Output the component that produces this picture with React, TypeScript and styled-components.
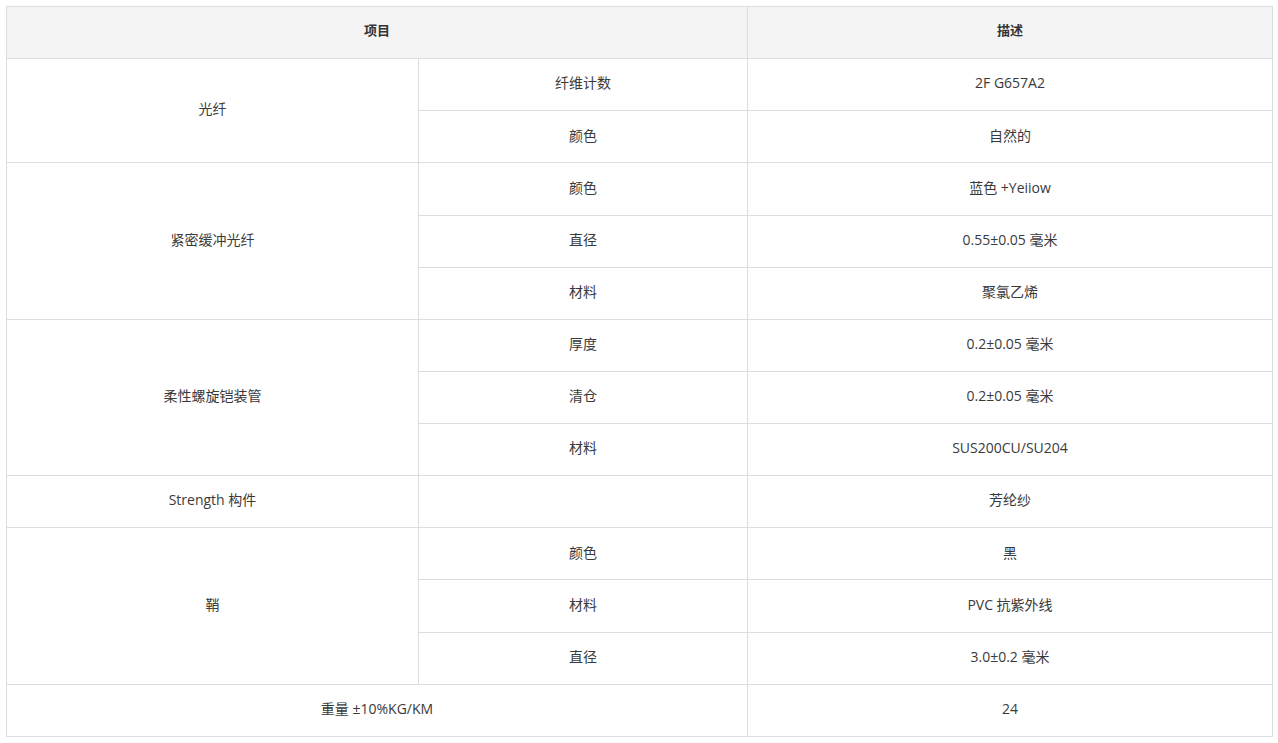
import React from 'react';
import styled, { createGlobalStyle } from 'styled-components';

const GlobalStyle = createGlobalStyle`
    body {
        margin: 6px 5px 6px 6px;
        background: #ffffff;
        font-family: "Open Sans", "Noto Sans CJK SC", sans-serif;
        color: #333333;
    }
`;

interface Row {
    group?: { label: string; span: number };
    item: string;
    value: string;
}

const rows: Row[] = [
    { group: { label: '光纤', span: 2 }, item: '纤维计数', value: '2F G657A2' },
    { item: '颜色', value: '自然的' },
    { group: { label: '紧密缓冲光纤', span: 3 }, item: '颜色', value: '蓝色 +Yeiiow' },
    { item: '直径', value: '0.55±0.05 毫米' },
    { item: '材料', value: '聚氯乙烯' },
    { group: { label: '柔性螺旋铠装管', span: 3 }, item: '厚度', value: '0.2±0.05 毫米' },
    { item: '清仓', value: '0.2±0.05 毫米' },
    { item: '材料', value: 'SUS200CU/SU204' },
    { group: { label: 'Strength 构件', span: 1 }, item: '', value: '芳纶纱' },
    { group: { label: '鞘', span: 3 }, item: '颜色', value: '黑' },
    { item: '材料', value: 'PVC 抗紫外线' },
    { item: '直径', value: '3.0±0.2 毫米' },
];

export default function App() {
    return (<>
        <GlobalStyle />
        <SpecTable>
            <colgroup>
                <col style={{ width: 412 }} />
                <col style={{ width: 329 }} />
                <col />
            </colgroup>
            <thead>
                <tr>
                    <HeadCell colSpan={2}>项目</HeadCell>
                    <HeadCell>描述</HeadCell>
                </tr>
            </thead>
            <tbody>
                {rows.map((row, i) => (
                    <tr key={i}>
                        {row.group && <Cell rowSpan={row.group.span}>{row.group.label}</Cell>}
                        <Cell>{row.item}</Cell>
                        <Cell>{row.value}</Cell>
                    </tr>
                ))}
                <tr>
                    <Cell colSpan={2}>重量 ±10%KG/KM</Cell>
                    <Cell>24</Cell>
                </tr>
            </tbody>
        </SpecTable>
    </>);
}

const SpecTable = styled.table`
    width: 1267px;
    border-collapse: collapse;
    table-layout: fixed;
    font-size: 14px;
    line-height: 1.4;
`;

const HeadCell = styled.th`
    height: 47.14px;
    padding: 0 10px 4px;
    background: #f4f4f4;
    border: 1px solid #dddddd;
    font-weight: bold;
    font-size: 13px;
    color: #333333;
    text-align: center;
    vertical-align: middle;
`;

const Cell = styled.td`
    height: 48.14px;
    padding: 0 10px 3px;
    border: 1px solid #dddddd;
    text-align: center;
    vertical-align: middle;
    color: #3a3a3a;
`;
